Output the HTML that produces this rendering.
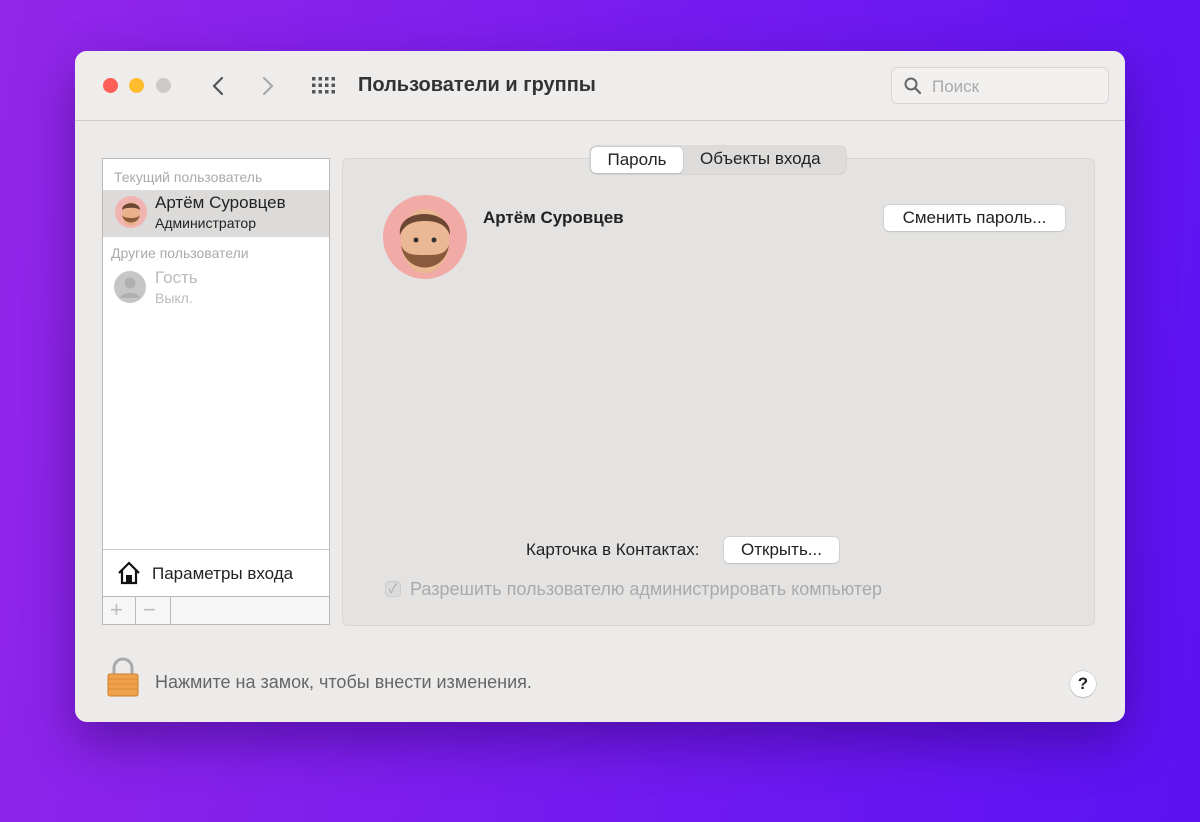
<!DOCTYPE html>
<html><head><meta charset="utf-8"><style>
*{box-sizing:border-box;margin:0;padding:0}
body{width:1200px;height:822px;overflow:hidden;background:linear-gradient(100deg,#9327e8 0%,#7a1cef 45%,#5a12f2 100%);font-family:"Liberation Sans","Noto Sans CJK SC",sans-serif;position:relative}
.win{position:absolute;left:75px;top:51px;width:1050px;height:671px;background:#ecebea;border-radius:12px;box-shadow:0 20px 50px rgba(40,0,90,.45);overflow:hidden}
.tb{position:absolute;left:0;top:0;width:100%;height:70px;background:#efedec;border-bottom:1px solid #cfcdcc}
.dot{position:absolute;top:27px;width:15px;height:15px;border-radius:50%}
.abs{position:absolute}
.list{position:absolute;left:27px;top:107px;width:228px;height:467px;background:#fff;border:1px solid #b9b8b7}
.panel{position:absolute;left:267px;top:107px;width:753px;height:468px;background:#e4e3e2;border:1px solid #d8d7d6;border-radius:6px}
.btn{position:absolute;background:#fff;border-radius:5px;box-shadow:0 0 0 .5px #c2c1c0,0 1px 1px rgba(0,0,0,.15);font-size:17px;color:#222;text-align:center}
</style></head><body>
<div class="win">
<div class="tb">
<div class="dot" style="left:28px;background:#fe5f57"></div>
<div class="dot" style="left:54px;background:#febc2e"></div>
<div class="dot" style="left:81px;background:#cdcbca"></div>
<svg class="abs" style="left:136px;top:25px" width="14" height="20"><path d="M11 2L3 10l8 8" fill="none" stroke="#555" stroke-width="2.2" stroke-linecap="round"/></svg>
<svg class="abs" style="left:186px;top:25px" width="14" height="20"><path d="M3 2l8 8-8 8" fill="none" stroke="#aaa" stroke-width="2.2" stroke-linecap="round"/></svg>
<svg class="abs" style="left:237px;top:26px" width="24" height="18" fill="#555"><g id="r"><rect x="0" y="0" width="3.5" height="3.5"/><rect x="6.5" y="0" width="3.5" height="3.5"/><rect x="13" y="0" width="3.5" height="3.5"/><rect x="19.5" y="0" width="3.5" height="3.5"/></g><use href="#r" y="6.5"/><use href="#r" y="13"/></svg>
<div class="abs" style="left:283px;top:23px;font-size:20px;font-weight:bold;color:#333">Пользователи и группы</div>
<div class="abs" style="left:816px;top:16px;width:218px;height:37px;border:1px solid #d8d6d5;border-radius:6px;background:#f2f0ef"></div>
<svg class="abs" style="left:829px;top:26px" width="18" height="18"><circle cx="7" cy="7" r="5.5" fill="none" stroke="#666" stroke-width="2"/><path d="M11 11l5 5" stroke="#666" stroke-width="2.2" stroke-linecap="round"/></svg>
<div class="abs" style="left:857px;top:26px;font-size:17px;color:#aaa">Поиск</div>
</div>
<div class="list">
<div class="abs" style="left:11px;top:10px;font-size:14px;color:#aaa">Текущий пользователь</div>
<div class="abs" style="left:0;top:31px;width:226px;height:47px;background:#dcdbda"></div>
<svg class="abs" style="left:12px;top:37px" width="32" height="32"><circle cx="16" cy="16" r="16" fill="#f2b4b0"/><ellipse cx="16" cy="18" rx="9" ry="12" fill="#e9b28c"/><path d="M7 14c0-9 18-9 18 0c-3-3-15-3-18 0z" fill="#6b4632"/><path d="M7 19c2 10 16 10 18 0c-2 4-16 4-18 0z" fill="#8b5a3c"/></svg>
<div class="abs" style="left:52px;top:34px;font-size:17px;color:#222">Артём Суровцев</div>
<div class="abs" style="left:52px;top:56px;font-size:14px;color:#222">Администратор</div>
<div class="abs" style="left:8px;top:86px;font-size:14px;color:#aaa">Другие пользователи</div>
<svg class="abs" style="left:11px;top:112px" width="32" height="32"><circle cx="16" cy="16" r="16" fill="#c6c6c6"/><circle cx="16" cy="12" r="5.5" fill="#b0b0b0"/><path d="M6 27c3-7 17-7 20 0" fill="#b0b0b0"/></svg>
<div class="abs" style="left:52px;top:109px;font-size:17px;color:#bbb">Гость</div>
<div class="abs" style="left:52px;top:131px;font-size:14px;color:#bbb">Выкл.</div>
<div class="abs" style="left:0;top:390px;width:226px;border-top:1px solid #c9c8c7"></div>
<svg class="abs" style="left:13px;top:401px" width="26" height="26"><path d="M3 13L13 3l10 10M6 10v13h14V10" fill="none" stroke="#111" stroke-width="2.2"/><rect x="10" y="15" width="6" height="8" fill="#111"/></svg>
<div class="abs" style="left:49px;top:405px;font-size:17px;color:#222">Параметры входа</div>
<div class="abs" style="left:0;top:437px;width:226px;height:28px;border-top:1px solid #b9b8b7;background:#f7f6f6"></div>
<div class="abs" style="left:32px;top:437px;height:28px;border-left:1px solid #bbb"></div>
<div class="abs" style="left:67px;top:437px;height:28px;border-left:1px solid #bbb"></div>
<div class="abs" style="left:7px;top:438px;font-size:22px;color:#bbb">+</div>
<div class="abs" style="left:40px;top:438px;font-size:22px;color:#bbb">−</div>
</div>
<div class="panel"></div>
<div class="abs" style="left:515px;top:95px;width:256px;height:28px;border-radius:6px;background:#dddcdb;box-shadow:0 0 0 .5px #c8c7c6"></div>
<div class="btn" style="left:516px;top:96px;width:92px;height:26px;line-height:26px">Пароль</div>
<div class="abs" style="left:625px;top:98px;font-size:17px;color:#222">Объекты входа</div>
<svg class="abs" style="left:308px;top:144px" width="84" height="84"><circle cx="42" cy="42" r="42" fill="#f2aaa6"/><ellipse cx="42" cy="46" rx="24" ry="32" fill="#eab892"/><path d="M17 40c-4-28 52-28 50 0c-4-10-12-14-25-14s-21 4-25 14z" fill="#6b4632"/><path d="M18 50c4 30 44 30 48 0c-4 10-12 10-24 10s-20 0-24-10z" fill="#8b5a3c"/><circle cx="33" cy="45" r="2.5" fill="#333"/><circle cx="51" cy="45" r="2.5" fill="#333"/></svg>
<div class="abs" style="left:408px;top:157px;font-size:17px;font-weight:bold;color:#222">Артём Суровцев</div>
<div class="btn" style="left:809px;top:154px;width:181px;height:26px;line-height:26px">Сменить пароль...</div>
<div class="abs" style="left:451px;top:489px;font-size:17px;color:#222">Карточка в Контактах:</div>
<div class="btn" style="left:649px;top:486px;width:115px;height:26px;line-height:26px">Открыть...</div>
<div class="abs" style="left:310px;top:530px;width:16px;height:16px;border-radius:4px;background:#dcdbda;border:1px solid #ccc;color:#aaa;font-size:13px;line-height:14px;text-align:center">✓</div>
<div class="abs" style="left:335px;top:528px;font-size:18px;color:#aaa">Разрешить пользователю администрировать компьютер</div>
<svg class="abs" style="left:32px;top:606px" width="32" height="40"><path d="M7 18V11a9 9 0 0118 0v7" fill="none" stroke="#aaa" stroke-width="3"/><rect x="1" y="17" width="30" height="22" rx="2" fill="#f0a24a" stroke="#c97d2c" stroke-width="1"/><g stroke="#d98a35" stroke-width="1"><path d="M1 22h30M1 27h30M1 32h30"/></g></svg>
<div class="abs" style="left:80px;top:621px;font-size:18px;color:#666">Нажмите на замок, чтобы внести изменения.</div>
<div class="abs" style="left:995px;top:620px;width:26px;height:26px;border-radius:50%;background:#fff;box-shadow:0 0 0 .5px #bbb,0 1px 1px rgba(0,0,0,.2);text-align:center;line-height:26px;font-size:17px;font-weight:bold;color:#222">?</div>
</div>
</body></html>
